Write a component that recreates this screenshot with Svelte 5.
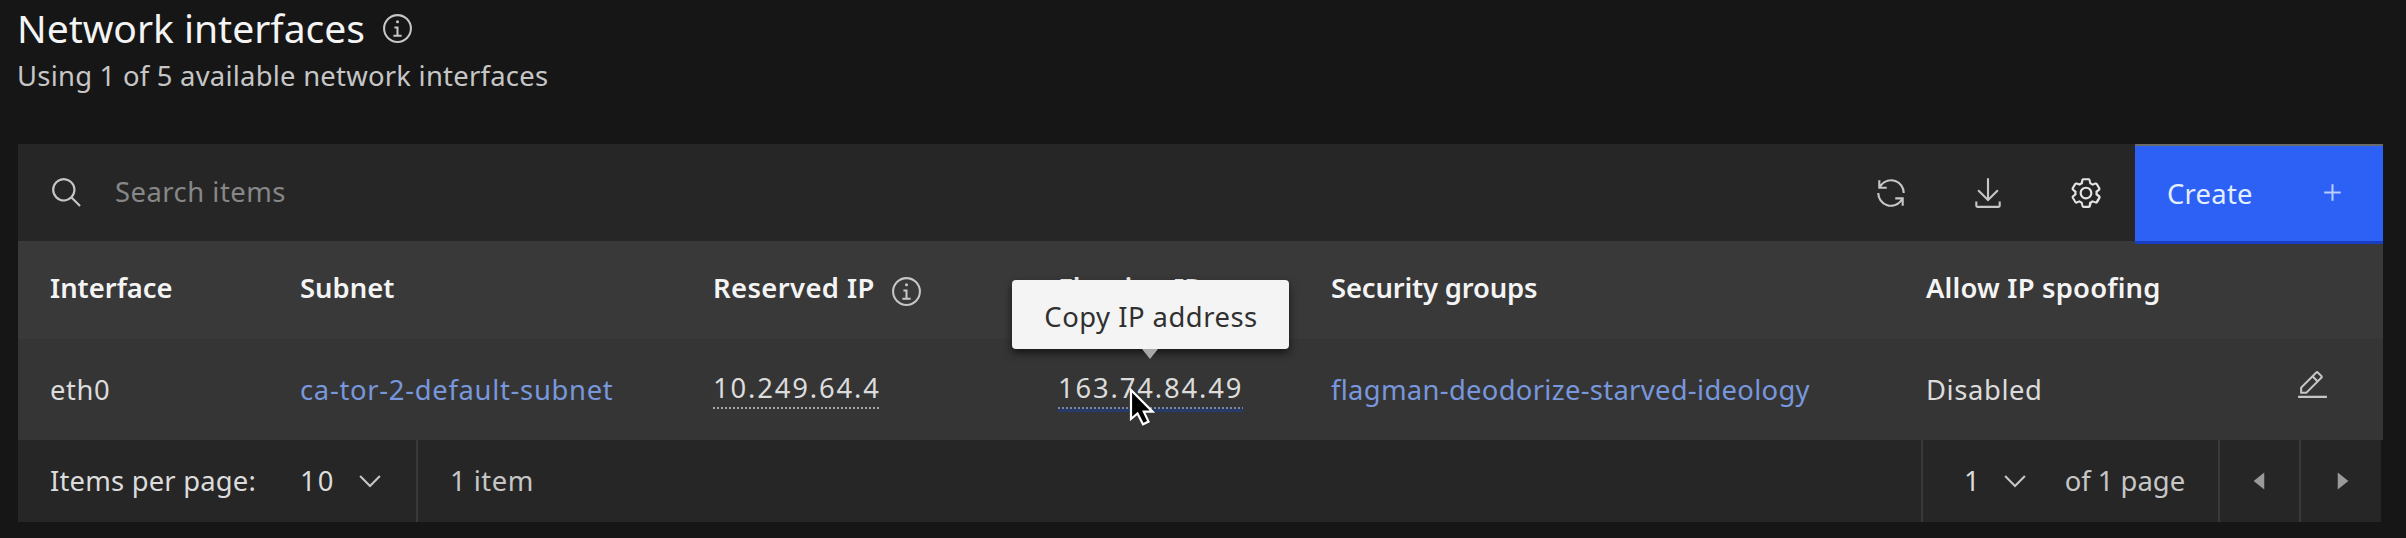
<script>
  const columns = [
    { label: 'Interface', cls: 'ls0' },
    { label: 'Subnet', cls: 'ls0' },
    { label: 'Reserved IP', cls: 'ls5', info: true },
    { label: 'Floating IP', cls: 'ls0' },
    { label: 'Security groups', cls: 'tight' },
    { label: 'Allow IP spoofing', cls: 'ls2' },
    { label: '', cls: 'ls0' }
  ];
</script>

{#snippet infoIcon()}
  <svg class="icon" viewBox="0 0 32 32" width="33" height="33">
    <path d="M17 22V14H13v2h2v6H12v2h8V22zM16 8a1.5 1.5 0 101.5 1.5A1.5 1.5 0 0016 8z" />
    <path d="M16,30A14,14,0,1,1,30,16,14,14,0,0,1,16,30ZM16,4A12,12,0,1,0,28,16,12,12,0,0,0,16,4Z" />
  </svg>
{/snippet}

{#snippet chevron()}
  <svg class="icon" viewBox="0 0 16 16" width="34" height="34">
    <path d="M8 11L3 6 3.7 5.3 8 9.6 12.3 5.3 13 6z" />
  </svg>
{/snippet}

<main>
  <header>
    <h1>Network interfaces {@render infoIcon()}</h1>
    <p>Using 1 of 5 available network interfaces</p>
  </header>

  <section class="toolbar">
    <svg class="icon search" viewBox="0 0 32 32" width="34" height="34">
      <path d="M29,27.5859l-7.5521-7.5521a11.0177,11.0177,0,1,0-1.4141,1.4141L27.5859,29ZM4,13a9,9,0,1,1,9,9A9.01,9.01,0,0,1,4,13Z" />
    </svg>
    <span class="placeholder">Search items</span>
    <div class="actions">
      <svg class="icon" viewBox="0 0 32 32" width="34" height="34">
        <path d="M12 10H6.78A11 11 0 0127 16h2A13 13 0 006 7.68V4H4v8h8zM20 22h5.22A11 11 0 015 16H3a13 13 0 0023 8.32V28h2V20H20z" />
      </svg>
      <svg class="icon" viewBox="0 0 32 32" width="34" height="34">
        <path d="M26 24v4H6V24H4v4a2 2 0 002 2H26a2 2 0 002-2V24zM26 14 24.59 12.59 17 20.17V2H15V20.17L7.41 12.59 6 14 16 24 26 14z" />
      </svg>
      <svg class="icon bright" viewBox="0 0 16 16" width="34" height="34">
        <path d="M13.5,8.4c0-0.1,0-0.3,0-0.4c0-0.1,0-0.3,0-0.4l1-0.8c0.4-0.3,0.4-0.9,0.2-1.3l-1.2-2C13.3,3.2,13,3,12.6,3c-0.1,0-0.2,0-0.3,0.1l-1.2,0.4c-0.2-0.1-0.4-0.3-0.7-0.4l-0.3-1.3C10.1,1.3,9.7,1,9.2,1H6.8c-0.5,0-0.9,0.3-1,0.8L5.6,3.1C5.3,3.2,5.1,3.3,4.9,3.4L3.7,3C3.6,3,3.5,3,3.4,3C3,3,2.7,3.2,2.5,3.5l-1.2,2C1.1,5.9,1.2,6.4,1.6,6.8l0.9,0.9c0,0.1,0,0.3,0,0.4c0,0.1,0,0.3,0,0.4L1.6,9.2c-0.4,0.3-0.5,0.9-0.2,1.3l1.2,2C2.7,12.8,3,13,3.4,13c0.1,0,0.2,0,0.3-0.1l1.2-0.4c0.2,0.1,0.4,0.3,0.7,0.4l0.3,1.3c0.1,0.5,0.5,0.8,1,0.8h2.4c0.5,0,0.9-0.3,1-0.8l0.3-1.3c0.2-0.1,0.4-0.2,0.7-0.4l1.2,0.4c0.1,0,0.2,0.1,0.3,0.1c0.4,0,0.7-0.2,0.9-0.5l1.1-2c0.2-0.4,0.2-0.9-0.2-1.3L13.5,8.4z M12.6,12l-1.7-0.6c-0.4,0.3-0.9,0.6-1.4,0.8L9.2,14H6.8l-0.4-1.8c-0.5-0.2-0.9-0.5-1.4-0.8L3.4,12l-1.2-2l1.4-1.2c-0.1-0.5-0.1-1.1,0-1.6L2.2,6l1.2-2l1.7,0.6C5.5,4.2,6,4,6.5,3.8L6.8,2h2.4l0.4,1.8c0.5,0.2,0.9,0.5,1.4,0.8L12.6,4l1.2,2l-1.4,1.2c0.1,0.5,0.1,1.1,0,1.6l1.4,1.2L12.6,12z M8,11c-1.7,0-3-1.3-3-3s1.3-3,3-3s3,1.3,3,3C11,9.6,9.7,11,8,11z M8,6C6.9,6,6,6.8,6,7.9c0,1.2,0.8,2.1,1.9,2.1c1.2,0,2.1-0.8,2.1-1.9C10,6.9,9.2,6,8,6z" />
      </svg>
    </div>
    <button class="create">
      <span>Create</span>
      <svg viewBox="0 0 32 32" width="33" height="33"><path d="M17 15V8H15v7H8v2h7v7h2V17h7V15z" /></svg>
    </button>
  </section>

  <div class="row head">
    {#each columns as c}
      <div class={c.cls}>{c.label}{#if c.info}{@render infoIcon()}{/if}</div>
    {/each}
  </div>

  <div class="row body">
    <div class="ls6">eth0</div>
    <div class="link ls8">ca-tor-2-default-subnet</div>
    <div><span class="ip">10.249.64.4</span></div>
    <div>
      <span class="ip active">163.74.84.49
        <span class="tooltip">Copy IP address</span>
        <svg class="cursor" viewBox="0 0 26 38" width="26" height="38">
          <path d="M2 2V31L8.5 25.5 14 36.2 19.5 33.6 14.8 23.6H23.5Z" />
        </svg>
      </span>
    </div>
    <div class="link ls3">flagman-deodorize-starved-ideology</div>
    <div class="ls7">Disabled</div>
    <div class="edit">
      <svg class="icon" viewBox="0 0 32 32" width="33" height="33">
        <path d="M2 26H30V28H2zM25.4 9c.8-.8.8-2 0-2.8l-3.6-3.6c-.8-.8-2-.8-2.8 0l-15 15V24h6.4L25.4 9zM20.4 4L24 7.6l-3 3L17.4 7 20.4 4zM6 22v-3.6l10-10 3.6 3.6-10 10H6z" />
      </svg>
    </div>
  </div>

  <footer>
    <div class="per-page"><span class="ls2">Items per page:</span><span class="num">10</span>{@render chevron()}</div>
    <div class="count">1 item</div>
    <div class="page"><span class="num">1</span>{@render chevron()}<span class="of">of 1 page</span></div>
    <div class="nav"><svg viewBox="0 0 32 32" width="34" height="34"><path d="M20 24L10 16 20 8z" /></svg></div>
    <div class="nav next"><svg viewBox="0 0 32 32" width="34" height="34"><path d="M12 8L22 16 12 24z" /></svg></div>
  </footer>
</main>

<style>
  :global(body) {
    background: #161616;
  }
  main {
    box-sizing: border-box;
    width: 2406px;
    height: 538px;
    padding: 0 23px 0 18px;
    overflow: hidden;
    background: #161616;
    color: #dcdcdc;
    font: 27.4px/36px 'Noto Sans', 'Open Sans', sans-serif;
    white-space: nowrap;
  }
  svg {
    display: block;
    flex: none;
  }
  .icon {
    fill: #c6c6c6;
  }
  .bright {
    fill: #e4e4e4;
  }
  header {
    height: 144px;
  }
  h1 {
    display: flex;
    align-items: center;
    gap: 16px;
    height: 56px;
    margin: 0 0 0 -1px;
    color: #f4f4f4;
    font-size: 39.1px;
    font-weight: 400;
    letter-spacing: -0.05px;
  }
  p {
    margin: 2px 0 0 -1px;
    color: #c6c6c6;
    letter-spacing: 0.25px;
  }
  .toolbar {
    display: flex;
    align-items: center;
    height: 97px;
    background: #262626;
  }
  .search {
    margin-left: 32px;
  }
  .placeholder {
    margin: -2px 0 0 31px;
    color: #878787;
    letter-spacing: 0.5px;
  }
  .actions {
    display: flex;
    gap: 63.5px;
    margin-left: auto;
    margin-right: 32.5px;
  }
  .create {
    display: flex;
    align-items: center;
    justify-content: space-between;
    box-sizing: border-box;
    align-self: flex-start;
    width: 248px;
    height: 100px;
    margin: 0;
    padding: 0 34px 2px 32px;
    border: 0;
    border-top: 2px solid #6b6b6b;
    border-bottom: 3px solid #173fc4;
    background: #2d61f6;
    color: #e3eeff;
    font: inherit;
    letter-spacing: 0.26px;
    z-index: 1;
  }
  .create span {
    padding-top: 2px;
  }
  .create svg {
    fill: #b9cdff;
  }
  .row {
    display: grid;
    grid-template-columns: 250px 413px 345px 273px 595px 370px 88px;
    align-items: center;
    padding-left: 32px;
  }
  .head {
    height: 98px;
    background: #393939;
    color: #f4f4f4;
    font-weight: 600;
  }
  .head div {
    display: flex;
    gap: 15px;
    margin-top: -5px;
  }
  .head .icon {
    position: relative;
    top: 5px;
    margin: 0 0 -4px;
  }
  .body {
    height: 101px;
    background: #353535;
  }
  .ls0 { letter-spacing: 0; }
  .tight { letter-spacing: -0.15px; }
  .ls2 { letter-spacing: 0.2px; }
  .ls3 { letter-spacing: 0.31px; }
  .ls5 { letter-spacing: 0.4px; }
  .ls6 { letter-spacing: 0.6px; }
  .ls7 { letter-spacing: 0.6px; }
  .ls8 { letter-spacing: 0.7px; }
  .link {
    color: #7897dc;
  }
  .ip {
    position: relative;
    display: inline-block;
    height: 39px;
    letter-spacing: 1.85px;
    background: repeating-linear-gradient(90deg, #a8a8a8 0 2px, transparent 2px 4px) left bottom / 100% 2px no-repeat;
  }
  .ip.active {
    background-image: repeating-linear-gradient(90deg, #7886ae 0 2px, transparent 2px 4px);
    box-shadow: 0 3px #263a6a;
  }
  .tooltip {
    position: absolute;
    left: -46px;
    top: -90px;
    width: 277px;
    height: 69px;
    border-radius: 4px;
    background: #f4f4f4;
    box-shadow: 0 4px 9px rgba(0, 0, 0, 0.6);
    color: #303030;
    letter-spacing: 0.5px;
    line-height: 73px;
    text-align: center;
    text-indent: 1px;
  }
  .tooltip::after {
    content: '';
    position: absolute;
    left: 130px;
    top: 69px;
    border: 8px solid transparent;
    border-top: 10px solid #a8a8a8;
    border-bottom: 0;
  }
  .cursor {
    position: absolute;
    left: 71px;
    top: 18px;
    fill: #000;
    stroke: #fff;
    stroke-width: 2.2px;
  }
  .edit {
    margin-top: -8px;
  }
  footer {
    display: flex;
    box-sizing: border-box;
    width: 2363px;
    height: 82px;
    background: #262626;
  }
  footer > div {
    display: flex;
    align-items: center;
    box-sizing: border-box;
    border-right: 2px solid #393939;
  }
  footer > .next {
    border-right: 0;
  }
  .per-page {
    width: 400px;
    padding-left: 32px;
  }
  .num {
    letter-spacing: 2px;
  }
  .per-page .num {
    margin: 0 18px 0 44px;
  }
  .count {
    flex: 1;
    padding-left: 32px;
    color: #c6c6c6;
    letter-spacing: 0.5px;
  }
  .page {
    width: 297px;
    padding-left: 41px;
  }
  .page .num {
    margin-right: 16px;
  }
  .of {
    margin-left: 33px;
    color: #c6c6c6;
  }
  .nav {
    width: 81px;
    justify-content: center;
    padding-left: 1px;
    fill: #9a9a9a;
  }
  .next {
    width: 80px;
  }
</style>
